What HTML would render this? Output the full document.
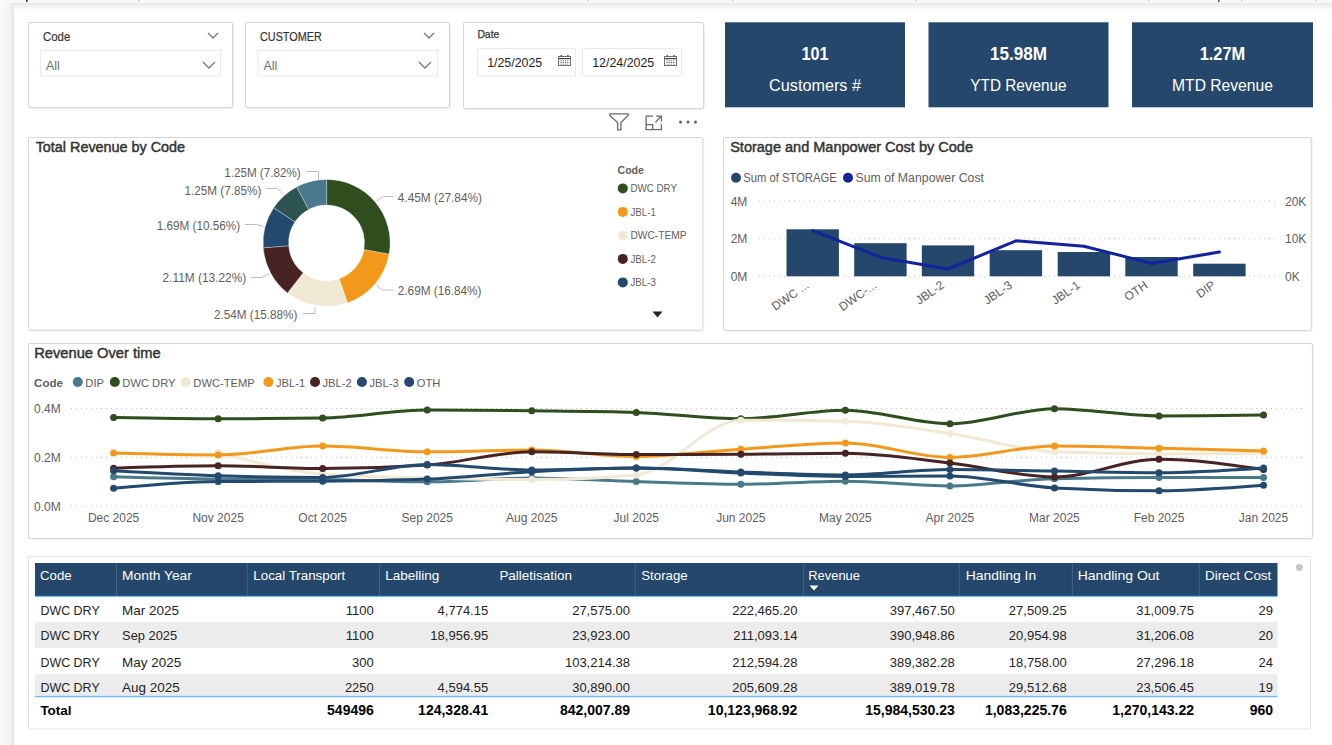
<!DOCTYPE html>
<html><head><meta charset="utf-8"><title>Dashboard</title>
<style>html,body{margin:0;padding:0;background:#fff;overflow:hidden;width:1332px;height:745px}svg{display:block}text{font-family:"Liberation Sans", sans-serif}</style>
</head><body>
<svg width="1332" height="745" viewBox="0 0 1332 745" font-family='"Liberation Sans", sans-serif'><rect x="0" y="0" width="1332" height="745" fill="#ffffff" />
<defs><linearGradient id="tsh" x1="0" y1="0" x2="0" y2="1"><stop offset="0" stop-color="#e6e6e6"/><stop offset="1" stop-color="#ffffff"/></linearGradient><linearGradient id="lsh" x1="0" y1="0" x2="1" y2="0"><stop offset="0" stop-color="#fbfbfb"/><stop offset="0.7" stop-color="#f3f3f3"/><stop offset="1" stop-color="#e4e4e4"/></linearGradient></defs>
<rect x="14" y="3" width="1318" height="7" fill="url(#tsh)" />
<rect x="0" y="3" width="14" height="745" fill="url(#lsh)" />
<rect x="0" y="0" width="1332" height="3" fill="#f8f8f8" />
<rect x="26" y="0" width="1.5" height="2" fill="#333" />
<rect x="138" y="0" width="1.5" height="1.5" fill="#ccc" />
<rect x="587" y="0" width="1.5" height="1.5" fill="#ccc" />
<rect x="732" y="0" width="1.5" height="1.5" fill="#ccc" />
<rect x="915" y="0" width="1.5" height="1.5" fill="#ccc" />
<rect x="1148" y="0" width="1.5" height="1.5" fill="#ccc" />
<rect x="1218" y="0" width="1.5" height="2" fill="#555" />
<rect x="1241" y="0" width="1.5" height="1.5" fill="#ccc" />
<rect x="1315" y="0" width="1.5" height="1.5" fill="#ccc" />
<rect x="29.5" y="23.5" width="204" height="85" fill="none" stroke="#efefef" stroke-width="1" rx="2"/>
<rect x="28.5" y="22.5" width="204" height="85" fill="#fff" stroke="#d6d6d6" stroke-width="1" rx="1.5"/>
<text x="43" y="41" font-size="12.5" fill="#333333" textLength="27.3" lengthAdjust="spacingAndGlyphs" stroke="#333333" stroke-width="0.2">Code</text>
<polyline points="208.0,33.0 213,38.0 218.0,33.0" fill="none" stroke="#7a7a7a" stroke-width="1.4"/>
<rect x="40.5" y="50.5" width="180" height="25.5" fill="#fff" stroke="#eaeaea" stroke-width="1" />
<text x="46" y="70" font-size="12.5" fill="#6e6e6e" >All</text>
<polyline points="203.0,62.0 209,68.0 215.0,62.0" fill="none" stroke="#7a7a7a" stroke-width="1.4"/>
<rect x="246.5" y="23.5" width="204" height="85" fill="none" stroke="#efefef" stroke-width="1" rx="2"/>
<rect x="245.5" y="22.5" width="204" height="85" fill="#fff" stroke="#d6d6d6" stroke-width="1" rx="1.5"/>
<text x="260" y="41" font-size="12.5" fill="#333333" textLength="61.8" lengthAdjust="spacingAndGlyphs" stroke="#333333" stroke-width="0.2">CUSTOMER</text>
<polyline points="424.0,33.0 429,38.0 434.0,33.0" fill="none" stroke="#7a7a7a" stroke-width="1.4"/>
<rect x="258.0" y="50.5" width="179.5" height="25.5" fill="#fff" stroke="#eaeaea" stroke-width="1" />
<text x="263.5" y="70" font-size="12.5" fill="#6e6e6e" >All</text>
<polyline points="419.0,62.0 425,68.0 431.0,62.0" fill="none" stroke="#7a7a7a" stroke-width="1.4"/>
<rect x="464.5" y="23.5" width="240" height="86" fill="none" stroke="#efefef" stroke-width="1" rx="2"/>
<rect x="463.5" y="22.5" width="240" height="86" fill="#fff" stroke="#d6d6d6" stroke-width="1" rx="1.5"/>
<text x="477.4" y="38" font-size="11" fill="#333333" textLength="21.9" lengthAdjust="spacingAndGlyphs" stroke="#333333" stroke-width="0.25">Date</text>
<rect x="477.5" y="48.5" width="98" height="27.5" fill="#fff" stroke="#eaeaea" stroke-width="1" />
<rect x="582.5" y="48.5" width="99" height="27.5" fill="#fff" stroke="#eaeaea" stroke-width="1" />
<text x="487.2" y="67" font-size="12.5" fill="#252423" textLength="55" lengthAdjust="spacingAndGlyphs" >1/25/2025</text>
<text x="592.2" y="67" font-size="12.5" fill="#252423" textLength="62" lengthAdjust="spacingAndGlyphs" >12/24/2025</text>
<g><rect x="558.5" y="56.5" width="12" height="9" fill="none" stroke="#707070" stroke-width="1"/><rect x="559" y="58" width="11" height="1.2" fill="#3c3c3c"/><rect x="560.5" y="55" width="1.4" height="1.8" fill="#555"/><rect x="567.2" y="55" width="1.4" height="1.8" fill="#555"/><rect x="560.5" y="60" width="1.2" height="1.2" fill="#a0a0a0"/><rect x="560.5" y="61.8" width="1.2" height="1.2" fill="#606060"/><rect x="560.5" y="63.6" width="1.2" height="1.2" fill="#a0a0a0"/><rect x="562.7" y="60" width="1.2" height="1.2" fill="#a0a0a0"/><rect x="562.7" y="61.8" width="1.2" height="1.2" fill="#606060"/><rect x="562.7" y="63.6" width="1.2" height="1.2" fill="#a0a0a0"/><rect x="564.9" y="60" width="1.2" height="1.2" fill="#a0a0a0"/><rect x="564.9" y="61.8" width="1.2" height="1.2" fill="#606060"/><rect x="564.9" y="63.6" width="1.2" height="1.2" fill="#a0a0a0"/><rect x="567.1" y="60" width="1.2" height="1.2" fill="#a0a0a0"/><rect x="567.1" y="61.8" width="1.2" height="1.2" fill="#606060"/><rect x="567.1" y="63.6" width="1.2" height="1.2" fill="#a0a0a0"/></g>
<g><rect x="664.5" y="56.5" width="12" height="9" fill="none" stroke="#707070" stroke-width="1"/><rect x="665" y="58" width="11" height="1.2" fill="#3c3c3c"/><rect x="666.5" y="55" width="1.4" height="1.8" fill="#555"/><rect x="673.2" y="55" width="1.4" height="1.8" fill="#555"/><rect x="666.5" y="60" width="1.2" height="1.2" fill="#a0a0a0"/><rect x="666.5" y="61.8" width="1.2" height="1.2" fill="#606060"/><rect x="666.5" y="63.6" width="1.2" height="1.2" fill="#a0a0a0"/><rect x="668.7" y="60" width="1.2" height="1.2" fill="#a0a0a0"/><rect x="668.7" y="61.8" width="1.2" height="1.2" fill="#606060"/><rect x="668.7" y="63.6" width="1.2" height="1.2" fill="#a0a0a0"/><rect x="670.9" y="60" width="1.2" height="1.2" fill="#a0a0a0"/><rect x="670.9" y="61.8" width="1.2" height="1.2" fill="#606060"/><rect x="670.9" y="63.6" width="1.2" height="1.2" fill="#a0a0a0"/><rect x="673.1" y="60" width="1.2" height="1.2" fill="#a0a0a0"/><rect x="673.1" y="61.8" width="1.2" height="1.2" fill="#606060"/><rect x="673.1" y="63.6" width="1.2" height="1.2" fill="#a0a0a0"/></g>
<rect x="725" y="22.3" width="180" height="85" fill="#24476b" />
<text x="815.0" y="60" font-size="18" fill="#ffffff" font-weight="bold" text-anchor="middle" textLength="27" lengthAdjust="spacingAndGlyphs" >101</text>
<text x="815.0" y="91" font-size="16" fill="#ffffff" text-anchor="middle" textLength="91.9" lengthAdjust="spacingAndGlyphs" >Customers #</text>
<rect x="928.5" y="22.3" width="180.0" height="85" fill="#24476b" />
<text x="1018.5" y="60" font-size="18" fill="#ffffff" font-weight="bold" text-anchor="middle" textLength="57" lengthAdjust="spacingAndGlyphs" >15.98M</text>
<text x="1018.5" y="91" font-size="16" fill="#ffffff" text-anchor="middle" textLength="96.3" lengthAdjust="spacingAndGlyphs" >YTD Revenue</text>
<rect x="1132" y="22.3" width="181" height="85" fill="#24476b" />
<text x="1222.5" y="60" font-size="18" fill="#ffffff" font-weight="bold" text-anchor="middle" textLength="45.6" lengthAdjust="spacingAndGlyphs" >1.27M</text>
<text x="1222.5" y="91" font-size="16" fill="#ffffff" text-anchor="middle" textLength="100.9" lengthAdjust="spacingAndGlyphs" >MTD Revenue</text>
<g fill="none" stroke="#6b6b6b" stroke-width="1.3" stroke-linejoin="miter"><path d="M609.8,113.8 H628.2 V115.4 L620.9,122.6 V129.9 H617.6 V122.6 L609.8,115.4 Z"/><path d="M652.9,116.1 H646.1 V129.6 H661.4 V124.2"/><path d="M656.1,116.1 H661.4 V121.4"/><path d="M646.1,124.6 H652.7 V129.6"/><path d="M655.5,122.3 L661.2,116.3"/></g>
<circle cx="680.5" cy="122" r="1.5" fill="#605e5c"/>
<circle cx="688" cy="122" r="1.5" fill="#605e5c"/>
<circle cx="695.5" cy="122" r="1.5" fill="#605e5c"/>
<rect x="29.5" y="138.5" width="674.3" height="192.7" fill="none" stroke="#efefef" stroke-width="1" rx="2"/>
<rect x="28.5" y="137.5" width="674.3" height="192.7" fill="#fff" stroke="#d6d6d6" stroke-width="1" rx="1.5"/>
<text x="35.7" y="152" font-size="14" fill="#333333" textLength="149.4" lengthAdjust="spacingAndGlyphs" stroke="#333333" stroke-width="0.45">Total Revenue by Code</text>
<path d="M326.60,179.40 A63.5,63.5 0 0 1 389.09,254.16 L364.00,249.64 A38,38 0 0 0 326.60,204.90 Z" fill="#2f4d1d" stroke="#ffffff" stroke-width="0.3"/>
<path d="M389.09,254.16 A63.5,63.5 0 0 1 347.45,302.88 L339.08,278.79 A38,38 0 0 0 364.00,249.64 Z" fill="#f2991c" stroke="#ffffff" stroke-width="0.3"/>
<path d="M347.45,302.88 A63.5,63.5 0 0 1 287.51,292.94 L303.21,272.85 A38,38 0 0 0 339.08,278.79 Z" fill="#f2e9d5" stroke="#ffffff" stroke-width="0.3"/>
<path d="M287.51,292.94 A63.5,63.5 0 0 1 263.29,247.79 L288.71,245.83 A38,38 0 0 0 303.21,272.85 Z" fill="#472324" stroke="#ffffff" stroke-width="0.3"/>
<path d="M263.29,247.79 A63.5,63.5 0 0 1 273.71,207.77 L294.95,221.87 A38,38 0 0 0 288.71,245.83 Z" fill="#234a6e" stroke="#ffffff" stroke-width="0.3"/>
<path d="M273.71,207.77 A63.5,63.5 0 0 1 296.64,186.91 L308.67,209.39 A38,38 0 0 0 294.95,221.87 Z" fill="#2d5453" stroke="#ffffff" stroke-width="0.3"/>
<path d="M296.64,186.91 A63.5,63.5 0 0 1 326.60,179.40 L326.60,204.90 A38,38 0 0 0 308.67,209.39 Z" fill="#4a798b" stroke="#ffffff" stroke-width="0.3"/>
<g fill="none" stroke="#bdbdbd" stroke-width="1"><polyline points="306,171.5 318.5,171.5 318.5,179.5"/><polyline points="266,188.5 277.5,188.5 283,194.5"/><polyline points="245,224.5 256.5,224.5 263.5,226.5"/><polyline points="251,277.5 262,277.5 269,273.5"/><polyline points="303,313.5 315,313.5 315,307.5"/><polyline points="376.5,201 383.5,196.5 393.5,196.5"/><polyline points="376.5,285.5 382.5,290 393.5,290"/></g>
<text x="224.2" y="177" font-size="12.5" fill="#605e5c" textLength="76.5" lengthAdjust="spacingAndGlyphs" >1.25M (7.82%)</text>
<text x="184.6" y="195" font-size="12.5" fill="#605e5c" textLength="76.7" lengthAdjust="spacingAndGlyphs" >1.25M (7.85%)</text>
<text x="156.8" y="230" font-size="12.5" fill="#605e5c" textLength="83.3" lengthAdjust="spacingAndGlyphs" >1.69M (10.56%)</text>
<text x="162.5" y="282" font-size="12.5" fill="#605e5c" textLength="83.7" lengthAdjust="spacingAndGlyphs" >2.11M (13.22%)</text>
<text x="214" y="318.5" font-size="12.5" fill="#605e5c" textLength="83.4" lengthAdjust="spacingAndGlyphs" >2.54M (15.88%)</text>
<text x="397.8" y="202" font-size="12.5" fill="#605e5c" textLength="84.2" lengthAdjust="spacingAndGlyphs" >4.45M (27.84%)</text>
<text x="397.8" y="295" font-size="12.5" fill="#605e5c" textLength="83.7" lengthAdjust="spacingAndGlyphs" >2.69M (16.84%)</text>
<text x="617.6" y="174" font-size="11" fill="#605e5c" font-weight="bold" textLength="26.3" lengthAdjust="spacingAndGlyphs" >Code</text>
<circle cx="622.8" cy="188.4" r="5" fill="#2f4d1d"/>
<text x="630.5" y="192.4" font-size="10.8" fill="#605e5c" textLength="46.5" lengthAdjust="spacingAndGlyphs" >DWC DRY</text>
<circle cx="622.8" cy="211.9" r="5" fill="#f2991c"/>
<text x="630.5" y="215.9" font-size="10.8" fill="#605e5c" textLength="25.4" lengthAdjust="spacingAndGlyphs" >JBL-1</text>
<circle cx="622.8" cy="235.4" r="5" fill="#f2e9d5"/>
<text x="630.5" y="239.4" font-size="10.8" fill="#605e5c" textLength="56" lengthAdjust="spacingAndGlyphs" >DWC-TEMP</text>
<circle cx="622.8" cy="258.9" r="5" fill="#472324"/>
<text x="630.5" y="262.9" font-size="10.8" fill="#605e5c" textLength="25.4" lengthAdjust="spacingAndGlyphs" >JBL-2</text>
<circle cx="622.8" cy="282.4" r="5" fill="#234a6e"/>
<text x="630.5" y="286.4" font-size="10.8" fill="#605e5c" textLength="25.4" lengthAdjust="spacingAndGlyphs" >JBL-3</text>
<path d="M652.5,311.5 H662.5 L657.5,317.5 Z" fill="#252423"/>
<rect x="724.5" y="138.5" width="587.8" height="192.89999999999998" fill="none" stroke="#efefef" stroke-width="1" rx="2"/>
<rect x="723.5" y="137.5" width="587.8" height="192.89999999999998" fill="#fff" stroke="#d6d6d6" stroke-width="1" rx="1.5"/>
<text x="730.2" y="152" font-size="14" fill="#333333" textLength="242.8" lengthAdjust="spacingAndGlyphs" stroke="#333333" stroke-width="0.45">Storage and Manpower Cost by Code</text>
<circle cx="736" cy="177.8" r="5" fill="#24476b"/>
<text x="743.3" y="182" font-size="12" fill="#605e5c" textLength="93.4" lengthAdjust="spacingAndGlyphs" >Sum of STORAGE</text>
<circle cx="848" cy="177.8" r="5" fill="#12239e"/>
<text x="855.5" y="182" font-size="12" fill="#605e5c" textLength="128.5" lengthAdjust="spacingAndGlyphs" >Sum of Manpower Cost</text>
<line x1="759" y1="201" x2="1275" y2="201" stroke="#c4c4c4" stroke-width="1" stroke-dasharray="1,4"/>
<text x="730.7" y="205.5" font-size="12" fill="#605e5c" >4M</text>
<text x="1285" y="205.5" font-size="12" fill="#605e5c" >20K</text>
<line x1="759" y1="238.7" x2="1275" y2="238.7" stroke="#c4c4c4" stroke-width="1" stroke-dasharray="1,4"/>
<text x="730.7" y="243.2" font-size="12" fill="#605e5c" >2M</text>
<text x="1285" y="243.2" font-size="12" fill="#605e5c" >10K</text>
<line x1="759" y1="276.3" x2="1275" y2="276.3" stroke="#c4c4c4" stroke-width="1" stroke-dasharray="1,4"/>
<text x="730.7" y="280.8" font-size="12" fill="#605e5c" >0M</text>
<text x="1285" y="280.8" font-size="12" fill="#605e5c" >0K</text>
<rect x="786.5" y="229.3" width="52.4" height="47.0" fill="#24476b" />
<text x="809.7" y="287" font-size="12" fill="#605e5c" text-anchor="end" transform="rotate(-35 809.7 287)">DWC ...</text>
<rect x="854.2" y="243.2" width="52.4" height="33.10000000000002" fill="#24476b" />
<text x="877.4000000000001" y="287" font-size="12" fill="#605e5c" text-anchor="end" transform="rotate(-35 877.4000000000001 287)">DWC-...</text>
<rect x="921.8" y="245.4" width="52.4" height="30.900000000000006" fill="#24476b" />
<text x="945.0" y="287" font-size="12" fill="#605e5c" text-anchor="end" transform="rotate(-35 945.0 287)">JBL-2</text>
<rect x="989.7" y="250.2" width="52.4" height="26.100000000000023" fill="#24476b" />
<text x="1012.9000000000001" y="287" font-size="12" fill="#605e5c" text-anchor="end" transform="rotate(-35 1012.9000000000001 287)">JBL-3</text>
<rect x="1057.7" y="252" width="52.4" height="24.30000000000001" fill="#24476b" />
<text x="1080.9" y="287" font-size="12" fill="#605e5c" text-anchor="end" transform="rotate(-35 1080.9 287)">JBL-1</text>
<rect x="1125.3" y="257" width="52.4" height="19.30000000000001" fill="#24476b" />
<text x="1148.5" y="287" font-size="12" fill="#605e5c" text-anchor="end" transform="rotate(-35 1148.5 287)">OTH</text>
<rect x="1193.2" y="263.7" width="52.4" height="12.600000000000023" fill="#24476b" />
<text x="1216.4" y="287" font-size="12" fill="#605e5c" text-anchor="end" transform="rotate(-35 1216.4 287)">DIP</text>
<polyline points="812.6,230.6 881,257.4 948,269 1015.9,240.8 1083.9,246.2 1151.5,263.4 1219.4,252.1" fill="none" stroke="#12239e" stroke-width="3" stroke-linejoin="round" stroke-linecap="round"/>
<rect x="29.5" y="344.5" width="1283.9" height="194.89999999999998" fill="none" stroke="#efefef" stroke-width="1" rx="2"/>
<rect x="28.5" y="343.5" width="1283.9" height="194.89999999999998" fill="#fff" stroke="#d6d6d6" stroke-width="1" rx="1.5"/>
<text x="34.2" y="358" font-size="14" fill="#333333" textLength="126.5" lengthAdjust="spacingAndGlyphs" stroke="#333333" stroke-width="0.45">Revenue Over time</text>
<text x="34.1" y="386.5" font-size="11.5" fill="#605e5c" font-weight="bold" textLength="28.9" lengthAdjust="spacingAndGlyphs" >Code</text>
<circle cx="77.8" cy="382" r="5" fill="#4a798b"/>
<text x="85.3" y="386.5" font-size="11.2" fill="#605e5c" >DIP</text>
<circle cx="114.8" cy="382" r="5" fill="#2f4d1d"/>
<text x="122.3" y="386.5" font-size="11.2" fill="#605e5c" >DWC DRY</text>
<circle cx="185.8" cy="382" r="5" fill="#f2e9d5"/>
<text x="193.3" y="386.5" font-size="11.2" fill="#605e5c" >DWC-TEMP</text>
<circle cx="268.4" cy="382" r="5" fill="#f2991c"/>
<text x="275.9" y="386.5" font-size="11.2" fill="#605e5c" >JBL-1</text>
<circle cx="315" cy="382" r="5" fill="#472324"/>
<text x="322.5" y="386.5" font-size="11.2" fill="#605e5c" >JBL-2</text>
<circle cx="361.9" cy="382" r="5" fill="#234a6e"/>
<text x="369.4" y="386.5" font-size="11.2" fill="#605e5c" >JBL-3</text>
<circle cx="409.2" cy="382" r="5" fill="#234a6e"/>
<text x="416.7" y="386.5" font-size="11.2" fill="#605e5c" >OTH</text>
<line x1="71" y1="408.5" x2="1305" y2="408.5" stroke="#c4c4c4" stroke-width="1" stroke-dasharray="1,4"/>
<text x="34" y="413.0" font-size="12" fill="#605e5c" >0.4M</text>
<line x1="71" y1="457.3" x2="1305" y2="457.3" stroke="#c4c4c4" stroke-width="1" stroke-dasharray="1,4"/>
<text x="34" y="461.8" font-size="12" fill="#605e5c" >0.2M</text>
<line x1="71" y1="506" x2="1305" y2="506" stroke="#c4c4c4" stroke-width="1" stroke-dasharray="1,4"/>
<text x="34" y="510.5" font-size="12" fill="#605e5c" >0.0M</text>
<text x="113.6" y="522" font-size="12" fill="#605e5c" text-anchor="middle" >Dec 2025</text>
<text x="218.14" y="522" font-size="12" fill="#605e5c" text-anchor="middle" >Nov 2025</text>
<text x="322.68" y="522" font-size="12" fill="#605e5c" text-anchor="middle" >Oct 2025</text>
<text x="427.22" y="522" font-size="12" fill="#605e5c" text-anchor="middle" >Sep 2025</text>
<text x="531.76" y="522" font-size="12" fill="#605e5c" text-anchor="middle" >Aug 2025</text>
<text x="636.3000000000001" y="522" font-size="12" fill="#605e5c" text-anchor="middle" >Jul 2025</text>
<text x="740.84" y="522" font-size="12" fill="#605e5c" text-anchor="middle" >Jun 2025</text>
<text x="845.3800000000001" y="522" font-size="12" fill="#605e5c" text-anchor="middle" >May 2025</text>
<text x="949.9200000000001" y="522" font-size="12" fill="#605e5c" text-anchor="middle" >Apr 2025</text>
<text x="1054.46" y="522" font-size="12" fill="#605e5c" text-anchor="middle" >Mar 2025</text>
<text x="1159.0" y="522" font-size="12" fill="#605e5c" text-anchor="middle" >Feb 2025</text>
<text x="1263.54" y="522" font-size="12" fill="#605e5c" text-anchor="middle" >Jan 2025</text>
<path d="M113.60,476.80 C148.45,477.82 183.29,478.83 218.14,479.10 C252.99,479.37 287.83,479.23 322.68,479.50 C357.53,479.77 392.37,481.80 427.22,481.80 C462.07,481.80 496.91,478.00 531.76,478.00 C566.61,478.00 601.45,480.55 636.30,481.60 C671.15,482.65 705.99,484.30 740.84,484.30 C775.69,484.30 810.53,481.20 845.38,481.20 C880.23,481.20 915.07,486.00 949.92,486.00 C984.77,486.00 1019.61,479.43 1054.46,478.70 C1089.31,477.97 1124.15,477.60 1159.00,477.60 C1193.85,477.60 1228.69,477.60 1263.54,477.60" fill="none" stroke="#4a798b" stroke-width="3"/>
<circle cx="113.60" cy="476.8" r="3.5" fill="#4a798b"/>
<circle cx="218.14" cy="479.1" r="3.5" fill="#4a798b"/>
<circle cx="322.68" cy="479.5" r="3.5" fill="#4a798b"/>
<circle cx="427.22" cy="481.8" r="3.5" fill="#4a798b"/>
<circle cx="531.76" cy="478" r="3.5" fill="#4a798b"/>
<circle cx="636.30" cy="481.6" r="3.5" fill="#4a798b"/>
<circle cx="740.84" cy="484.3" r="3.5" fill="#4a798b"/>
<circle cx="845.38" cy="481.2" r="3.5" fill="#4a798b"/>
<circle cx="949.92" cy="486" r="3.5" fill="#4a798b"/>
<circle cx="1054.46" cy="478.7" r="3.5" fill="#4a798b"/>
<circle cx="1159.00" cy="477.6" r="3.5" fill="#4a798b"/>
<circle cx="1263.54" cy="477.6" r="3.5" fill="#4a798b"/>
<path d="M113.60,417.50 C148.45,418.12 183.29,418.75 218.14,418.75 C252.99,418.75 287.83,418.53 322.68,418.10 C357.53,417.67 392.37,410.10 427.22,410.10 C462.07,410.10 496.91,410.42 531.76,410.80 C566.61,411.18 601.45,411.33 636.30,412.40 C671.15,413.47 705.99,418.75 740.84,418.75 C775.69,418.75 810.53,410.30 845.38,410.30 C880.23,410.30 915.07,423.80 949.92,423.80 C984.77,423.80 1019.61,408.70 1054.46,408.70 C1089.31,408.70 1124.15,415.90 1159.00,415.90 C1193.85,415.90 1228.69,415.50 1263.54,415.10" fill="none" stroke="#2f4d1d" stroke-width="3"/>
<circle cx="113.60" cy="417.5" r="3.5" fill="#2f4d1d"/>
<circle cx="218.14" cy="418.75" r="3.5" fill="#2f4d1d"/>
<circle cx="322.68" cy="418.1" r="3.5" fill="#2f4d1d"/>
<circle cx="427.22" cy="410.1" r="3.5" fill="#2f4d1d"/>
<circle cx="531.76" cy="410.8" r="3.5" fill="#2f4d1d"/>
<circle cx="636.30" cy="412.4" r="3.5" fill="#2f4d1d"/>
<circle cx="740.84" cy="418.75" r="3.5" fill="#2f4d1d"/>
<circle cx="845.38" cy="410.3" r="3.5" fill="#2f4d1d"/>
<circle cx="949.92" cy="423.8" r="3.5" fill="#2f4d1d"/>
<circle cx="1054.46" cy="408.7" r="3.5" fill="#2f4d1d"/>
<circle cx="1159.00" cy="415.9" r="3.5" fill="#2f4d1d"/>
<circle cx="1263.54" cy="415.1" r="3.5" fill="#2f4d1d"/>
<path d="M218.14,452.40 C252.99,461.87 287.83,471.33 322.68,474.00 C357.53,476.67 392.37,477.08 427.22,478.00 C462.07,478.92 496.91,479.50 531.76,479.50 C566.61,479.50 601.45,477.97 636.30,474.90 C671.15,471.83 705.99,420.20 740.84,420.20 C775.69,420.20 810.53,420.57 845.38,421.30 C880.23,422.03 915.07,428.42 949.92,433.50 C984.77,438.58 1019.61,450.40 1054.46,451.80 C1089.31,453.20 1124.15,453.90 1159.00,453.90 C1193.85,453.90 1228.69,453.55 1263.54,453.20" fill="none" stroke="#f2e9d5" stroke-width="3"/>
<circle cx="218.14" cy="452.4" r="3.5" fill="#f2e9d5"/>
<circle cx="322.68" cy="474" r="3.5" fill="#f2e9d5"/>
<circle cx="427.22" cy="478" r="3.5" fill="#f2e9d5"/>
<circle cx="531.76" cy="479.5" r="3.5" fill="#f2e9d5"/>
<circle cx="636.30" cy="474.9" r="3.5" fill="#f2e9d5"/>
<circle cx="740.84" cy="420.2" r="3.5" fill="#f2e9d5"/>
<circle cx="845.38" cy="421.3" r="3.5" fill="#f2e9d5"/>
<circle cx="949.92" cy="433.5" r="3.5" fill="#f2e9d5"/>
<circle cx="1054.46" cy="451.8" r="3.5" fill="#f2e9d5"/>
<circle cx="1159.00" cy="453.9" r="3.5" fill="#f2e9d5"/>
<circle cx="1263.54" cy="453.2" r="3.5" fill="#f2e9d5"/>
<path d="M113.60,453.10 C148.45,454.05 183.29,455.00 218.14,455.00 C252.99,455.00 287.83,446.10 322.68,446.10 C357.53,446.10 392.37,451.80 427.22,451.80 C462.07,451.80 496.91,450.00 531.76,450.00 C566.61,450.00 601.45,456.60 636.30,456.60 C671.15,456.60 705.99,451.48 740.84,449.20 C775.69,446.92 810.53,442.90 845.38,442.90 C880.23,442.90 915.07,457.40 949.92,457.40 C984.77,457.40 1019.61,446.10 1054.46,446.10 C1089.31,446.10 1124.15,447.48 1159.00,448.30 C1193.85,449.12 1228.69,450.06 1263.54,451.00" fill="none" stroke="#f2991c" stroke-width="3"/>
<circle cx="113.60" cy="453.1" r="3.5" fill="#f2991c"/>
<circle cx="218.14" cy="455" r="3.5" fill="#f2991c"/>
<circle cx="322.68" cy="446.1" r="3.5" fill="#f2991c"/>
<circle cx="427.22" cy="451.8" r="3.5" fill="#f2991c"/>
<circle cx="531.76" cy="450" r="3.5" fill="#f2991c"/>
<circle cx="636.30" cy="456.6" r="3.5" fill="#f2991c"/>
<circle cx="740.84" cy="449.2" r="3.5" fill="#f2991c"/>
<circle cx="845.38" cy="442.9" r="3.5" fill="#f2991c"/>
<circle cx="949.92" cy="457.4" r="3.5" fill="#f2991c"/>
<circle cx="1054.46" cy="446.1" r="3.5" fill="#f2991c"/>
<circle cx="1159.00" cy="448.3" r="3.5" fill="#f2991c"/>
<circle cx="1263.54" cy="451" r="3.5" fill="#f2991c"/>
<path d="M113.60,468.20 C148.45,466.98 183.29,465.75 218.14,465.75 C252.99,465.75 287.83,468.60 322.68,468.60 C357.53,468.60 392.37,467.40 427.22,465.00 C462.07,462.60 496.91,451.80 531.76,451.80 C566.61,451.80 601.45,454.50 636.30,454.50 C671.15,454.50 705.99,454.43 740.84,454.30 C775.69,454.17 810.53,453.20 845.38,453.20 C880.23,453.20 915.07,458.93 949.92,462.90 C984.77,466.87 1019.61,477.00 1054.46,477.00 C1089.31,477.00 1124.15,459.30 1159.00,459.30 C1193.85,459.30 1228.69,464.40 1263.54,469.50" fill="none" stroke="#472324" stroke-width="3"/>
<circle cx="113.60" cy="468.2" r="3.5" fill="#472324"/>
<circle cx="218.14" cy="465.75" r="3.5" fill="#472324"/>
<circle cx="322.68" cy="468.6" r="3.5" fill="#472324"/>
<circle cx="427.22" cy="465" r="3.5" fill="#472324"/>
<circle cx="531.76" cy="451.8" r="3.5" fill="#472324"/>
<circle cx="636.30" cy="454.5" r="3.5" fill="#472324"/>
<circle cx="740.84" cy="454.3" r="3.5" fill="#472324"/>
<circle cx="845.38" cy="453.2" r="3.5" fill="#472324"/>
<circle cx="949.92" cy="462.9" r="3.5" fill="#472324"/>
<circle cx="1054.46" cy="477" r="3.5" fill="#472324"/>
<circle cx="1159.00" cy="459.3" r="3.5" fill="#472324"/>
<circle cx="1263.54" cy="469.5" r="3.5" fill="#472324"/>
<path d="M113.60,470.70 C148.45,472.64 183.29,474.58 218.14,475.70 C252.99,476.82 287.83,477.40 322.68,477.40 C357.53,477.40 392.37,464.40 427.22,464.40 C462.07,464.40 496.91,470.00 531.76,470.00 C566.61,470.00 601.45,468.00 636.30,468.00 C671.15,468.00 705.99,470.85 740.84,472.00 C775.69,473.15 810.53,474.90 845.38,474.90 C880.23,474.90 915.07,469.60 949.92,469.60 C984.77,469.60 1019.61,470.58 1054.46,471.10 C1089.31,471.62 1124.15,472.70 1159.00,472.70 C1193.85,472.70 1228.69,470.30 1263.54,467.90" fill="none" stroke="#234a6e" stroke-width="3"/>
<circle cx="113.60" cy="470.7" r="3.5" fill="#234a6e"/>
<circle cx="218.14" cy="475.7" r="3.5" fill="#234a6e"/>
<circle cx="322.68" cy="477.4" r="3.5" fill="#234a6e"/>
<circle cx="427.22" cy="464.4" r="3.5" fill="#234a6e"/>
<circle cx="531.76" cy="470" r="3.5" fill="#234a6e"/>
<circle cx="636.30" cy="468" r="3.5" fill="#234a6e"/>
<circle cx="740.84" cy="472" r="3.5" fill="#234a6e"/>
<circle cx="845.38" cy="474.9" r="3.5" fill="#234a6e"/>
<circle cx="949.92" cy="469.6" r="3.5" fill="#234a6e"/>
<circle cx="1054.46" cy="471.1" r="3.5" fill="#234a6e"/>
<circle cx="1159.00" cy="472.7" r="3.5" fill="#234a6e"/>
<circle cx="1263.54" cy="467.9" r="3.5" fill="#234a6e"/>
<path d="M113.60,488.30 C148.45,485.00 183.29,481.70 218.14,481.50 C252.99,481.30 287.83,481.40 322.68,481.20 C357.53,481.00 392.37,480.50 427.22,479.10 C462.07,477.70 496.91,473.55 531.76,471.70 C566.61,469.85 601.45,468.00 636.30,468.00 C671.15,468.00 705.99,471.60 740.84,473.00 C775.69,474.40 810.53,476.40 845.38,476.40 C880.23,476.40 915.07,475.90 949.92,475.90 C984.77,475.90 1019.61,486.03 1054.46,487.90 C1089.31,489.77 1124.15,490.70 1159.00,490.70 C1193.85,490.70 1228.69,487.95 1263.54,485.20" fill="none" stroke="#234a6e" stroke-width="3"/>
<circle cx="113.60" cy="488.3" r="3.5" fill="#234a6e"/>
<circle cx="218.14" cy="481.5" r="3.5" fill="#234a6e"/>
<circle cx="322.68" cy="481.2" r="3.5" fill="#234a6e"/>
<circle cx="427.22" cy="479.1" r="3.5" fill="#234a6e"/>
<circle cx="531.76" cy="471.7" r="3.5" fill="#234a6e"/>
<circle cx="636.30" cy="468" r="3.5" fill="#234a6e"/>
<circle cx="740.84" cy="473" r="3.5" fill="#234a6e"/>
<circle cx="845.38" cy="476.4" r="3.5" fill="#234a6e"/>
<circle cx="949.92" cy="475.9" r="3.5" fill="#234a6e"/>
<circle cx="1054.46" cy="487.9" r="3.5" fill="#234a6e"/>
<circle cx="1159.00" cy="490.7" r="3.5" fill="#234a6e"/>
<circle cx="1263.54" cy="485.2" r="3.5" fill="#234a6e"/>
<rect x="28.5" y="556.5" width="1282" height="172.5" fill="#fff" stroke="#e2e2e2" stroke-width="1" rx="1.5"/>
<rect x="35" y="563" width="1242.5" height="33" fill="#24476b" />
<line x1="116.5" y1="563" x2="116.5" y2="596" stroke="#46627f" stroke-width="1"/>
<line x1="247.3" y1="563" x2="247.3" y2="596" stroke="#46627f" stroke-width="1"/>
<line x1="379.5" y1="563" x2="379.5" y2="596" stroke="#46627f" stroke-width="1"/>
<line x1="635.2" y1="563" x2="635.2" y2="596" stroke="#46627f" stroke-width="1"/>
<line x1="803.4" y1="563" x2="803.4" y2="596" stroke="#46627f" stroke-width="1"/>
<line x1="959.3" y1="563" x2="959.3" y2="596" stroke="#46627f" stroke-width="1"/>
<line x1="1072.4" y1="563" x2="1072.4" y2="596" stroke="#46627f" stroke-width="1"/>
<line x1="1199.3" y1="563" x2="1199.3" y2="596" stroke="#46627f" stroke-width="1"/>
<rect x="35" y="595.7" width="1242.5" height="1.5" fill="#118dff" />
<rect x="35" y="596.6" width="1242.5" height="25.199999999999932" fill="#ffffff" />
<rect x="35" y="621.8" width="1242.5" height="26.100000000000023" fill="#ececec" />
<rect x="35" y="647.9" width="1242.5" height="26.300000000000068" fill="#ffffff" />
<rect x="35" y="674.2" width="1242.5" height="21.0" fill="#ececec" />
<rect x="35" y="695.7" width="1242.5" height="1.5" fill="#6cb6ff" />
<text x="40.1" y="580" font-size="13" fill="#ffffff" textLength="31.5" lengthAdjust="spacingAndGlyphs" >Code</text>
<text x="122.1" y="580" font-size="13" fill="#ffffff" textLength="69.7" lengthAdjust="spacingAndGlyphs" >Month Year</text>
<text x="253.3" y="580" font-size="13" fill="#ffffff" textLength="91.9" lengthAdjust="spacingAndGlyphs" >Local Transport</text>
<text x="385.2" y="580" font-size="13" fill="#ffffff" textLength="54.1" lengthAdjust="spacingAndGlyphs" >Labelling</text>
<text x="499.4" y="580" font-size="13" fill="#ffffff" textLength="72.6" lengthAdjust="spacingAndGlyphs" >Palletisation</text>
<text x="641.3" y="580" font-size="13" fill="#ffffff" textLength="46.3" lengthAdjust="spacingAndGlyphs" >Storage</text>
<text x="808.3" y="580" font-size="13" fill="#ffffff" textLength="51.7" lengthAdjust="spacingAndGlyphs" >Revenue</text>
<text x="965.8" y="580" font-size="13" fill="#ffffff" textLength="70.4" lengthAdjust="spacingAndGlyphs" >Handling In</text>
<text x="1077.7" y="580" font-size="13" fill="#ffffff" textLength="81.8" lengthAdjust="spacingAndGlyphs" >Handling Out</text>
<text x="1205" y="580" font-size="13" fill="#ffffff" textLength="66.3" lengthAdjust="spacingAndGlyphs" >Direct Cost</text>
<path d="M809.5,585.5 H818.5 L814,590.5 Z" fill="#ffffff"/>
<text x="40.4" y="614.8" font-size="13" fill="#252423" textLength="59.3" lengthAdjust="spacingAndGlyphs" >DWC DRY</text>
<text x="122.1" y="614.8" font-size="13" fill="#252423" textLength="57" lengthAdjust="spacingAndGlyphs" >Mar 2025</text>
<text x="373.8" y="614.8" font-size="13" fill="#252423" text-anchor="end" >1100</text>
<text x="488.2" y="614.8" font-size="13" fill="#252423" text-anchor="end" >4,774.15</text>
<text x="630" y="614.8" font-size="13" fill="#252423" text-anchor="end" >27,575.00</text>
<text x="797.4" y="614.8" font-size="13" fill="#252423" text-anchor="end" >222,465.20</text>
<text x="954.8" y="614.8" font-size="13" fill="#252423" text-anchor="end" >397,467.50</text>
<text x="1066.7" y="614.8" font-size="13" fill="#252423" text-anchor="end" >27,509.25</text>
<text x="1194" y="614.8" font-size="13" fill="#252423" text-anchor="end" >31,009.75</text>
<text x="1273" y="614.8" font-size="13" fill="#252423" text-anchor="end" >29</text>
<text x="40.4" y="640.4" font-size="13" fill="#252423" textLength="59.3" lengthAdjust="spacingAndGlyphs" >DWC DRY</text>
<text x="122.1" y="640.4" font-size="13" fill="#252423" textLength="55" lengthAdjust="spacingAndGlyphs" >Sep 2025</text>
<text x="373.8" y="640.4" font-size="13" fill="#252423" text-anchor="end" >1100</text>
<text x="488.2" y="640.4" font-size="13" fill="#252423" text-anchor="end" >18,956.95</text>
<text x="630" y="640.4" font-size="13" fill="#252423" text-anchor="end" >23,923.00</text>
<text x="797.4" y="640.4" font-size="13" fill="#252423" text-anchor="end" >211,093.14</text>
<text x="954.8" y="640.4" font-size="13" fill="#252423" text-anchor="end" >390,948.86</text>
<text x="1066.7" y="640.4" font-size="13" fill="#252423" text-anchor="end" >20,954.98</text>
<text x="1194" y="640.4" font-size="13" fill="#252423" text-anchor="end" >31,206.08</text>
<text x="1273" y="640.4" font-size="13" fill="#252423" text-anchor="end" >20</text>
<text x="40.4" y="666.8" font-size="13" fill="#252423" textLength="59.3" lengthAdjust="spacingAndGlyphs" >DWC DRY</text>
<text x="122.1" y="666.8" font-size="13" fill="#252423" textLength="59.2" lengthAdjust="spacingAndGlyphs" >May 2025</text>
<text x="373.8" y="666.8" font-size="13" fill="#252423" text-anchor="end" >300</text>
<text x="630" y="666.8" font-size="13" fill="#252423" text-anchor="end" >103,214.38</text>
<text x="797.4" y="666.8" font-size="13" fill="#252423" text-anchor="end" >212,594.28</text>
<text x="954.8" y="666.8" font-size="13" fill="#252423" text-anchor="end" >389,382.28</text>
<text x="1066.7" y="666.8" font-size="13" fill="#252423" text-anchor="end" >18,758.00</text>
<text x="1194" y="666.8" font-size="13" fill="#252423" text-anchor="end" >27,296.18</text>
<text x="1273" y="666.8" font-size="13" fill="#252423" text-anchor="end" >24</text>
<text x="40.4" y="691.7" font-size="13" fill="#252423" textLength="59.3" lengthAdjust="spacingAndGlyphs" >DWC DRY</text>
<text x="122.1" y="691.7" font-size="13" fill="#252423" textLength="57.7" lengthAdjust="spacingAndGlyphs" >Aug 2025</text>
<text x="373.8" y="691.7" font-size="13" fill="#252423" text-anchor="end" >2250</text>
<text x="488.2" y="691.7" font-size="13" fill="#252423" text-anchor="end" >4,594.55</text>
<text x="630" y="691.7" font-size="13" fill="#252423" text-anchor="end" >30,890.00</text>
<text x="797.4" y="691.7" font-size="13" fill="#252423" text-anchor="end" >205,609.28</text>
<text x="954.8" y="691.7" font-size="13" fill="#252423" text-anchor="end" >389,019.78</text>
<text x="1066.7" y="691.7" font-size="13" fill="#252423" text-anchor="end" >29,512.68</text>
<text x="1194" y="691.7" font-size="13" fill="#252423" text-anchor="end" >23,506.45</text>
<text x="1273" y="691.7" font-size="13" fill="#252423" text-anchor="end" >19</text>
<text x="40.4" y="714.6" font-size="13.5" fill="#000000" font-weight="bold" textLength="31.2" lengthAdjust="spacingAndGlyphs" >Total</text>
<text x="373.8" y="714.6" font-size="14" fill="#000000" font-weight="bold" text-anchor="end" >549496</text>
<text x="488.2" y="714.6" font-size="14" fill="#000000" font-weight="bold" text-anchor="end" >124,328.41</text>
<text x="630" y="714.6" font-size="14" fill="#000000" font-weight="bold" text-anchor="end" >842,007.89</text>
<text x="797.4" y="714.6" font-size="14" fill="#000000" font-weight="bold" text-anchor="end" >10,123,968.92</text>
<text x="954.8" y="714.6" font-size="14" fill="#000000" font-weight="bold" text-anchor="end" >15,984,530.23</text>
<text x="1066.7" y="714.6" font-size="14" fill="#000000" font-weight="bold" text-anchor="end" >1,083,225.76</text>
<text x="1194" y="714.6" font-size="14" fill="#000000" font-weight="bold" text-anchor="end" >1,270,143.22</text>
<text x="1273" y="714.6" font-size="14" fill="#000000" font-weight="bold" text-anchor="end" >960</text>
<circle cx="1299.4" cy="567.5" r="3.5" fill="#c8c8c8"/></svg>
</body></html>
